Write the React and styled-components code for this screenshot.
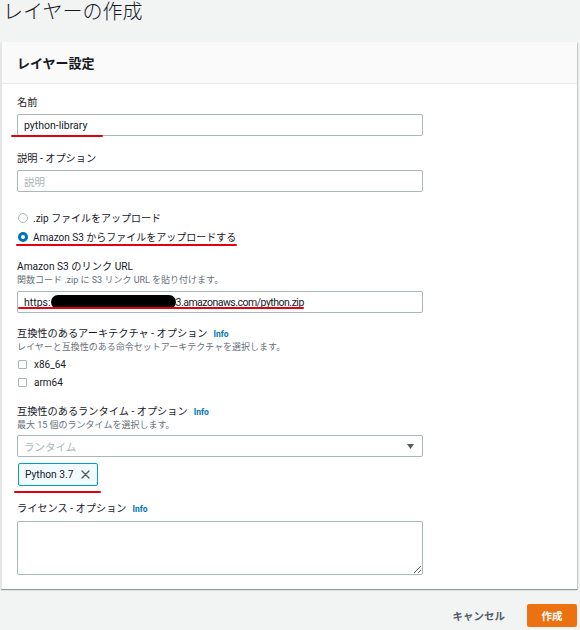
import React from 'react'
import styled, { createGlobalStyle } from 'styled-components'

const GlobalStyle = createGlobalStyle`
  html, body {
    margin: 0;
    padding: 0;
    background: #f2f3f3;
  }
  body {
    font-family: Roboto, "Noto Sans CJK JP", sans-serif;
    color: #16191f;
  }
`

const Page = styled.div`
  width: 580px;
  height: 630px;
  box-sizing: border-box;
  padding: 0 3px 0 1px;
  overflow: hidden;
`

const Title = styled.h1`
  margin: 0;
  height: 42px;
  padding-left: 2px;
  font-size: 20px;
  line-height: 24px;
  font-weight: 300;
  color: #16191f;
`

const Panel = styled.section`
  background: #fff;
  border-left: 1px solid #e3e6e6;
  box-shadow: 0 1px 1px 0 rgba(0, 28, 36, 0.3), 1px 1px 1px 0 rgba(0, 28, 36, 0.15);
`

const PanelHeader = styled.header`
  height: 42px;
  box-sizing: border-box;
  display: flex;
  align-items: center;
  padding-left: 15px;
  background: #fafafa;
  border-bottom: 1px solid #eaeded;
  font-size: 13px;
  font-weight: 700;
`

const PanelBody = styled.div`
  padding: 12px 15px 14px;
  display: flex;
  flex-direction: column;
`

const Field = styled.div`
  position: relative;
  margin-top: ${p => p.$gap || 0}px;
  display: flex;
  flex-direction: column;
`

const Label = styled.div`
  font-size: 10.2px;
  line-height: 14px;
  display: flex;
  align-items: center;
  gap: 6px;
`

const InfoLink = styled.span`
  font-size: 8.5px;
  font-weight: 700;
  color: #0073bb;
`

const Desc = styled.div`
  font-size: 9px;
  line-height: 12px;
  color: #687078;
`

const Control = styled.div`
  margin-top: ${p => p.$gap ?? 4}px;
  width: 406px;
  height: ${p => p.$h || 22}px;
  box-sizing: border-box;
  border: 1px solid #aab7b8;
  border-radius: 2px;
  background: #fff;
  display: flex;
  align-items: center;
  padding: 0 6px;
  font-size: 10.5px;
  color: ${p => (p.$placeholder ? '#aab7b8' : '#16191f')};
`

const Tight = styled.span`
  letter-spacing: -0.5px;
`

const Redact = styled.span`
  display: inline-block;
  width: 125px;
  height: 14px;
  background: #000;
  border-radius: 7px;
`

const Caret = styled.svg`
  margin-left: auto;
  margin-right: 2px;
`

const TextArea = styled.textarea`
  margin-top: 5px;
  width: 406px;
  height: 54px;
  box-sizing: border-box;
  border: 1px solid #aab7b8;
  border-radius: 2px;
  resize: vertical;
  font-family: inherit;
`

const OptionList = styled.div`
  position: relative;
  margin-top: ${p => p.$gap || 0}px;
  display: flex;
  flex-direction: column;
`

const OptionRow = styled.label`
  height: ${p => p.$h}px;
  display: flex;
  align-items: center;
  gap: ${p => p.$space || 7}px;
  padding-left: 1px;
  font-size: 10px;
`

const Radio = styled.span`
  width: 10px;
  height: 10px;
  box-sizing: border-box;
  border-radius: 50%;
  border: ${p => (p.$on ? '3px solid #0073bb' : '1px solid #aab7b8')};
  background: #fff;
`

const Check = styled.span`
  width: 9px;
  height: 9px;
  box-sizing: border-box;
  border: 1px solid #aab7b8;
  border-radius: 1px;
  background: #fff;
`

const Token = styled.div`
  margin-top: 6px;
  align-self: flex-start;
  height: 23px;
  box-sizing: border-box;
  display: flex;
  align-items: center;
  gap: 8px;
  padding: 0 7px 0 6px;
  margin-left: 1px;
  background: #f1faff;
  border: 1px solid #00a1c9;
  border-radius: 2px;
  font-size: 10.2px;
`

const Mark = styled.div`
  position: absolute;
  left: ${p => p.$left}px;
  top: ${p => p.$top}px;
  width: ${p => p.$width}px;
  height: 2px;
  background: #e3000f;
  border-radius: 1px;
`

const Footer = styled.footer`
  margin-top: 15px;
  display: flex;
  justify-content: flex-end;
  align-items: center;
  gap: 22px;
`

const TextButton = styled.span`
  font-size: 10.5px;
  font-weight: 700;
  color: #545b64;
`

const PrimaryButton = styled.span`
  height: 23px;
  width: 50px;
  display: flex;
  align-items: center;
  justify-content: center;
  background: #ec7211;
  border-radius: 2px;
  color: #fff;
  font-size: 10.5px;
  font-weight: 700;
`

export default function App() {
  return (
    <>
      <GlobalStyle />
      <Page>
        <Title>レイヤーの作成</Title>
        <Panel>
          <PanelHeader>レイヤー設定</PanelHeader>
          <PanelBody>
            <Field>
              <Label>名前</Label>
              <Control>python-library</Control>
              <Mark $left={-6} $top={39} $width={92} />
            </Field>

            <Field $gap={16}>
              <Label>説明 - オプション</Label>
              <Control $placeholder>説明</Control>
            </Field>

            <OptionList $gap={16}>
              <OptionRow $h={19} $space={5}>
                <Radio />
                .zip ファイルをアップロード
              </OptionRow>
              <OptionRow $h={19} $space={5}>
                <Radio $on />
                Amazon S3 からファイルをアップロードする
              </OptionRow>
              <Mark $left={-1} $top={36} $width={221} />
            </OptionList>

            <Field $gap={14}>
              <Label>Amazon S3 のリンク URL</Label>
              <Desc>関数コード .zip に S3 リンク URL を貼り付けます。</Desc>
              <Control $gap={5}>
                https:<Redact />
                <Tight>3.amazonaws.com/python.zip</Tight>
              </Control>
              <Mark $left={1} $top={47} $width={286} />
            </Field>

            <Field $gap={14}>
              <Label>
                互換性のあるアーキテクチャ - オプション <InfoLink>Info</InfoLink>
              </Label>
              <Desc>レイヤーと互換性のある命令セットアーキテクチャを選択します。</Desc>
              <OptionList $gap={2}>
                <OptionRow $h={18}>
                  <Check />
                  x86_64
                </OptionRow>
                <OptionRow $h={18}>
                  <Check />
                  arm64
                </OptionRow>
              </OptionList>
            </Field>

            <Field $gap={14}>
              <Label>
                互換性のあるランタイム - オプション <InfoLink>Info</InfoLink>
              </Label>
              <Desc>最大 15 個のランタイムを選択します。</Desc>
              <Control $placeholder>
                ランタイム
                <Caret width="7" height="5" viewBox="0 0 7 5">
                  <path d="M0 0h7L3.5 5z" fill="#545b64" />
                </Caret>
              </Control>
              <Token>
                Python 3.7
                <svg width="9" height="9" viewBox="0 0 9 9">
                  <path d="M1 1l7 7M8 1L1 8" stroke="#545b64" strokeWidth="1.4" strokeLinecap="round" />
                </svg>
              </Token>
              <Mark $left={-3} $top={86} $width={87} />
            </Field>

            <Field $gap={16}>
              <Label>
                ライセンス - オプション <InfoLink>Info</InfoLink>
              </Label>
              <TextArea />
            </Field>
          </PanelBody>
        </Panel>
        <Footer>
          <TextButton>キャンセル</TextButton>
          <PrimaryButton>作成</PrimaryButton>
        </Footer>
      </Page>
    </>
  )
}
